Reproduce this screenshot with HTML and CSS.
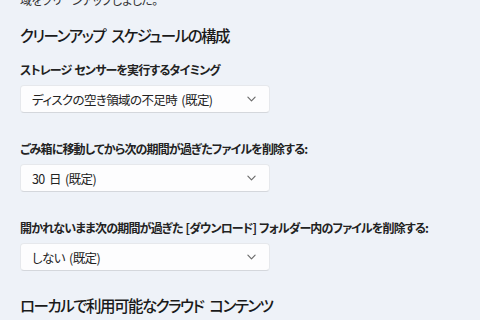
FILE: index.html
```html
<!DOCTYPE html>
<html lang="ja">
<head>
<meta charset="utf-8">
<link rel="stylesheet" href="styles.css">
</head>
<body>
<div class="page">
  <p class="intro">域をクリーンアップしました。</p>
  <h2 class="heading first">クリーンアップ スケジュールの構成</h2>

  <div class="field">
    <div class="label">ストレージ センサーを実行するタイミング</div>
    <div class="select"><span>ディスクの空き領域の不足時 (既定)</span><svg class="chev" viewBox="0 0 10 6" width="9" height="6"><path d="M1 1 L5 5 L9 1" fill="none" stroke="#6b6b6b" stroke-width="1.3" stroke-linecap="round" stroke-linejoin="round"/></svg></div>
  </div>

  <div class="field">
    <div class="label">ごみ箱に移動してから次の期間が過ぎたファイルを削除する:</div>
    <div class="select"><span>30 日 (既定)</span><svg class="chev" viewBox="0 0 10 6" width="9" height="6"><path d="M1 1 L5 5 L9 1" fill="none" stroke="#6b6b6b" stroke-width="1.3" stroke-linecap="round" stroke-linejoin="round"/></svg></div>
  </div>

  <div class="field">
    <div class="label">開かれないまま次の期間が過ぎた [ダウンロード] フォルダー内のファイルを削除する:</div>
    <div class="select"><span>しない (既定)</span><svg class="chev" viewBox="0 0 10 6" width="9" height="6"><path d="M1 1 L5 5 L9 1" fill="none" stroke="#6b6b6b" stroke-width="1.3" stroke-linecap="round" stroke-linejoin="round"/></svg></div>
  </div>

  <h2 class="heading">ローカルで利用可能なクラウド コンテンツ</h2>
</div>
</body>
</html>
```
FILE: styles.css
```css
html, body {
  margin: 0;
  padding: 0;
  background: #eef2f8;
  overflow: hidden;
}
body {
  font-family: "Noto Sans CJK JP", "Noto Sans", sans-serif;
  font-feature-settings: "palt";
  color: #1b1b1b;
}
.page {
  width: 480px;
  height: 320px;
  padding: 0 20px;
  box-sizing: border-box;
  display: flex;
  flex-direction: column;
}
.intro {
  margin: -8px 0 0;
  font-size: 12px;
  line-height: 16px;
  letter-spacing: -0.6px;
  color: #333;
}
.heading {
  margin: 23px 0 0;
  font-size: 15.5px;
  line-height: 22px;
  font-weight: 500;
  letter-spacing: -1.5px;
  word-spacing: 4px;
  color: #1a1a1a;
}
.heading.first {
  margin-top: 16px;
}
.field {
  display: flex;
  flex-direction: column;
  gap: 7px;
  margin-top: 28px;
}
.heading.first + .field {
  margin-top: 16px;
}
.label {
  font-size: 12px;
  line-height: 16px;
  font-weight: 700;
  letter-spacing: -0.85px;
  word-spacing: 1px;
  color: #222;
}
.select {
  width: 250px;
  height: 28px;
  box-sizing: border-box;
  display: flex;
  align-items: center;
  justify-content: space-between;
  padding: 0 13px 0 11px;
  background: #fdfdfe;
  border: 1px solid #e6e8ec;
  border-bottom-color: #d4d7dc;
  border-radius: 4px;
  font-size: 12.5px;
  letter-spacing: -0.6px;
  word-spacing: 2px;
  color: #222;
}
.chev {
  display: block;
}
```
